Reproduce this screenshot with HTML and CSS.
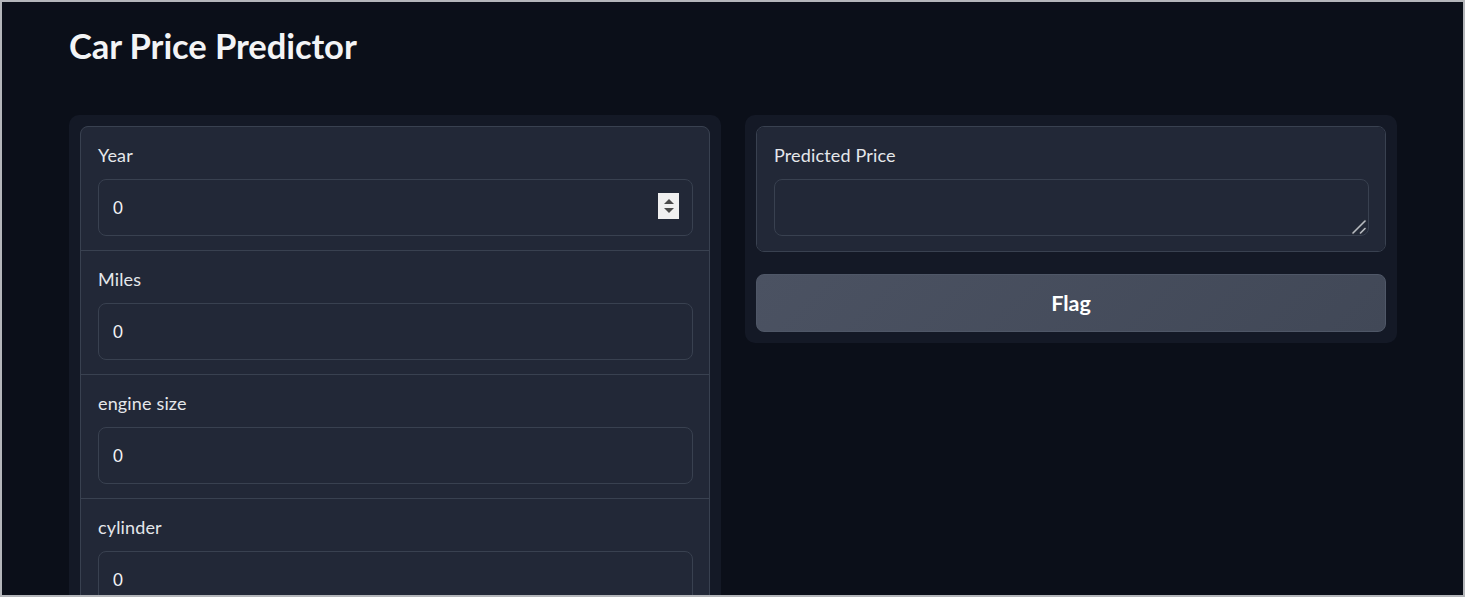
FILE: index.html
```html
<!DOCTYPE html>
<html lang="en">
<head>
<meta charset="utf-8">
<title>Car Price Predictor</title>
<link rel="stylesheet" href="styles.css">
</head>
<body>
<div class="frame">
  <main class="app">
    <h1 class="title">Car Price Predictor</h1>
    <div class="row">
      <section class="panel panel-left">
        <div class="form">
          <div class="field">
            <label class="label">Year</label>
            <div class="input-wrap">
              <input class="input" type="text" value="0">
              <span class="spinner"><span class="tri-up"></span><span class="tri-down"></span></span>
            </div>
          </div>
          <div class="field">
            <label class="label">Miles</label>
            <div class="input-wrap"><input class="input" type="text" value="0"></div>
          </div>
          <div class="field">
            <label class="label">engine size</label>
            <div class="input-wrap"><input class="input" type="text" value="0"></div>
          </div>
          <div class="field">
            <label class="label">cylinder</label>
            <div class="input-wrap"><input class="input" type="text" value="0"></div>
          </div>
        </div>
      </section>
      <section class="panel panel-right">
        <div class="form">
          <div class="field field-out">
            <label class="label">Predicted Price</label>
            <div class="input-wrap">
              <textarea class="textarea" rows="1"></textarea>
              <svg class="grip" width="16" height="16" viewBox="0 0 16 16" aria-hidden="true">
                <path d="M2 14 L14 2" stroke="#2a2f3a" stroke-width="3.2" stroke-linecap="round"/>
                <path d="M2 14 L14 2" stroke="#b9bcc2" stroke-width="1.6" stroke-linecap="round"/>
                <path d="M9.5 14 L14 9.5" stroke="#2a2f3a" stroke-width="3.2" stroke-linecap="round"/>
                <path d="M9.5 14 L14 9.5" stroke="#b9bcc2" stroke-width="1.6" stroke-linecap="round"/>
              </svg>
            </div>
          </div>
        </div>
        <button class="btn" type="button">Flag</button>
      </section>
    </div>
  </main>
</div>
</body>
</html>
```

FILE: styles.css
```css
* { box-sizing: border-box; }

html, body {
  margin: 0;
  padding: 0;
  height: 100%;
  overflow: hidden;
}

body {
  background: #b4b6ba;
  font-family: "Lato", "Source Sans Pro", "Noto Sans", sans-serif;
  color: #e5e7eb;
}

.frame {
  margin: 2px;
  height: calc(100% - 4px);
  background: #0b0f19;
  overflow: hidden;
}

.app {
  padding: 0 66px 0 67px;
}

.title {
  margin: 0;
  padding-top: 23px;
  height: 113px;
  font-size: 34.6px;
  line-height: 42px;
  font-weight: 700;
  color: #f3f4f6;
  letter-spacing: -0.1px;
}

.row {
  display: flex;
  align-items: flex-start;
  gap: 24px;
}

.panel {
  flex: 1 1 0;
  background: #141926;
  border-radius: 10px;
  padding: 11px;
}

.panel-right {
  display: flex;
  flex-direction: column;
  gap: 22px;
}

.form {
  border: 1px solid #394150;
  border-radius: 8px;
  background: #394150;
  display: flex;
  flex-direction: column;
  gap: 1px;
  overflow: hidden;
}

.field {
  background: #222837;
  padding: 17px 16px 14px 17px;
  display: flex;
  flex-direction: column;
}

.field-out {
  padding-bottom: 15px;
}

.label {
  font-size: 18px;
  line-height: 22px;
  margin-bottom: 13px;
  color: #e5e7eb;
  letter-spacing: 0.15px;
}

.input-wrap {
  position: relative;
}

.input, .textarea {
  display: block;
  width: 100%;
  height: 57px;
  background: #222837;
  border: 1px solid #394150;
  border-radius: 8px;
  padding: 0 14px;
  font-family: inherit;
  font-size: 17px;
  color: #f3f4f6;
  outline: none;
}

.textarea {
  resize: none;
  padding: 12px 14px;
}

.grip {
  position: absolute;
  right: 2px;
  bottom: 1px;
}

.spinner {
  position: absolute;
  right: 14px;
  top: 14px;
  width: 21px;
  height: 26px;
  background: #f0f0f0;
  display: flex;
  flex-direction: column;
  align-items: center;
  justify-content: center;
  gap: 4px;
}

.tri-up, .tri-down {
  width: 0;
  height: 0;
  border-left: 5px solid transparent;
  border-right: 5px solid transparent;
}

.tri-up { border-bottom: 5px solid #4a4a4a; }
.tri-down { border-top: 5px solid #4a4a4a; }

.btn {
  height: 58px;
  border: 1px solid #4f5767;
  border-radius: 8px;
  background: linear-gradient(135deg, #4b5262, #414857);
  color: #ffffff;
  font-family: inherit;
  font-size: 21.5px;
  font-weight: 700;
  cursor: pointer;
}
```
